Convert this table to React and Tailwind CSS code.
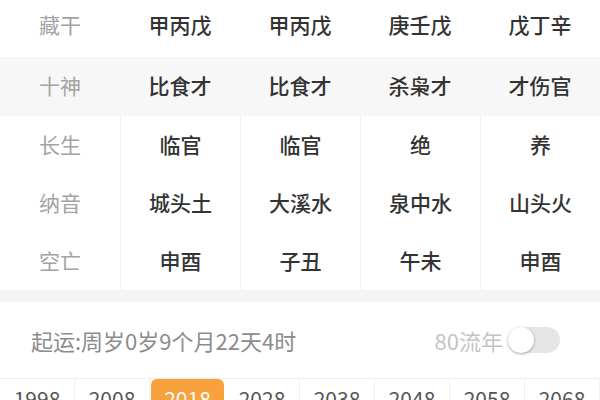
const font = { fontFamily: '"Noto Sans CJK SC", "Noto Sans", sans-serif' };

const topRows = [
  { label: "藏干", values: ["甲丙戊", "甲丙戊", "庚壬戊", "戊丁辛"], bg: "bg-white", h: "h-[57px] pb-[7px]" },
  { label: "十神", values: ["比食才", "比食才", "杀枭才", "才伤官"], bg: "bg-[#f7f7f8]", h: "h-[57px]" },
];

const gridRows = [
  { label: "长生", values: ["临官", "临官", "绝", "养"] },
  { label: "纳音", values: ["城头土", "大溪水", "泉中水", "山头火"] },
  { label: "空亡", values: ["申酉", "子丑", "午未", "申酉"] },
];

const years = ["1998", "2008", "2018", "2028", "2038", "2048", "2058", "2068"];

const App = () => {
  return (
    <div className="w-[600px] h-[400px] overflow-hidden bg-white" style={font}>
      {topRows.map((row) => (
        <div key={row.label} className={`grid grid-cols-5 items-center ${row.bg} ${row.h}`}>
          <div className="text-center text-[21px] text-[#a3a3a3]">{row.label}</div>
          {row.values.map((v, i) => (
            <div key={i} className="text-center text-[21px] font-medium text-[#333]">
              {v}
            </div>
          ))}
        </div>
      ))}

      <div className="bg-[#f7f7f8] pt-[2px]">
        <div className="grid grid-cols-5 bg-white">
          <div className="flex flex-col">
            {gridRows.map((row) => (
              <div key={row.label} className="h-[58px] flex items-center justify-center text-[21px] text-[#a3a3a3]">
                {row.label}
              </div>
            ))}
          </div>
          {[0, 1, 2, 3].map((col) => (
            <div key={col} className="flex flex-col border-l border-[#f3f3f3]">
              {gridRows.map((row) => (
                <div key={row.label} className="h-[58px] flex items-center justify-center text-[21px] font-medium text-[#333]">
                  {row.values[col]}
                </div>
              ))}
            </div>
          ))}
        </div>
      </div>

      <div className="h-[12px] bg-[#f5f5f6]" />

      <div className="flex items-center justify-between h-[76px] pl-[31px] pr-[40px]">
        <span className="text-[22px] text-[#8c8c8c]">起运:周岁0岁9个月22天4时</span>
        <div className="flex items-center gap-[5px]">
          <span className="text-[22px] text-[#c4c4c4]">80流年</span>
          <div className="relative w-[52px] h-[26px] rounded-full bg-[#e6e6e6]">
            <div className="absolute left-0 top-0 w-[26px] h-[26px] rounded-full bg-white shadow-[0_1px_3px_rgba(0,0,0,0.35)]" />
          </div>
        </div>
      </div>

      <div className="grid grid-cols-8 border-t border-[#efefef]">
        {years.map((y) => (
          <div
            key={y}
            className={
              y === "2018"
                ? "h-[40px] pt-[4px] text-center text-[21px] text-white bg-[#f7a23c] rounded-t-[6px] mx-[1px]"
                : "h-[40px] pt-[4px] text-center text-[21px] text-[#555] border-r border-[#f0f0f0]"
            }
          >
            {y}
          </div>
        ))}
      </div>
    </div>
  );
};

export default App;
